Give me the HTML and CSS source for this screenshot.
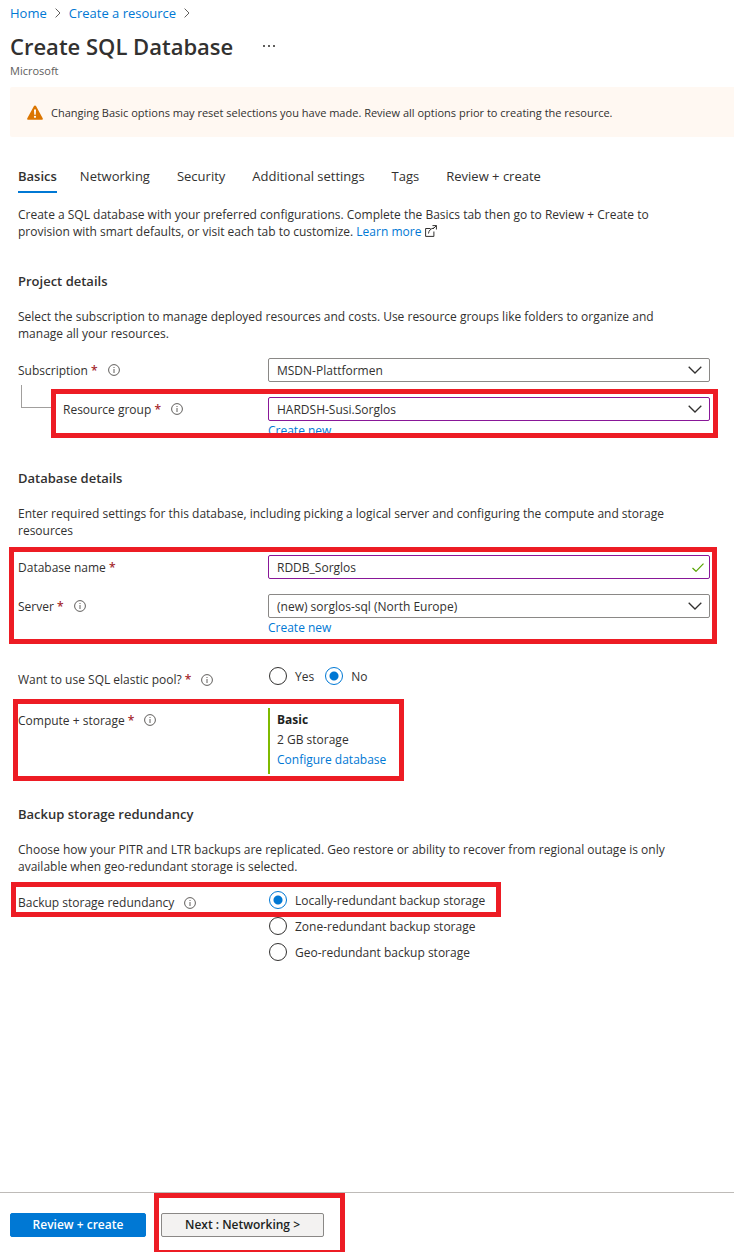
FILE: index.html
```html
<!DOCTYPE html>
<html lang="en">
<head>
<meta charset="utf-8">
<meta name="viewport" content="width=device-width, initial-scale=1">
<title>Create SQL Database</title>
<link rel="stylesheet" href="styles.css">
</head>
<body>
<svg class="sprite" aria-hidden="true">
  <symbol id="info" viewBox="0 0 12 12"><circle cx="6" cy="6" r="5.4" fill="none" stroke="#605e5c" stroke-width="1"/><path d="M6 5v4M6 3v1" stroke="#605e5c" stroke-width="1"/></symbol>
  <symbol id="down" viewBox="0 0 14 8"><path d="M.7.8 7 7 13.3.8" fill="none" stroke="#323130" stroke-width="1.3"/></symbol>
  <symbol id="right" viewBox="0 0 6 10"><path d="M.6.6 5 5 .6 9.400" fill="none" stroke="#605e5c" stroke-width="1"/></symbol>
</svg>
<div class="page">
  <header class="header">
    <nav class="crumbs" aria-label="Breadcrumb">
      <a href="#">Home</a><svg class="crumb-arrow"><use href="#right"/></svg>
      <a href="#">Create a resource</a><svg class="crumb-arrow"><use href="#right"/></svg>
    </nav>
    <div class="title-row">
      <h1>Create SQL Database</h1>
      <button class="more" type="button" aria-label="More actions"><svg viewBox="0 0 12 2"><path d="M0 0h2v2H0zM5 0h2v2H5zM10 0h2v2h-2z" fill="#605e5c"/></svg></button>
    </div>
    <p class="publisher">Microsoft</p>
  </header>

  <div class="banner" role="status">
    <svg class="warn" viewBox="0 0 16 15"><path d="M8 .4c.5 0 .8.3 1 .6l6.700 12.200c.4.8 0 1.600-.9 1.600H1.200c-.9 0-1.300-.8-.9-1.600L7 1c.2-.3.500-.6 1-.6z" fill="#db7500"/><path d="M7 4.500h2l-.3 5.300H7.300z" fill="#fff"/><circle cx="8" cy="11.800" r="1.100" fill="#fff"/></svg>
    <p>Changing Basic options may reset selections you have made. Review all options prior to creating the resource.</p>
  </div>

  <main class="content">
    <nav class="tabs" aria-label="Steps">
      <a class="tab active" href="#" aria-current="page">Basics</a>
      <a class="tab" href="#">Networking</a>
      <a class="tab" href="#">Security</a>
      <a class="tab" href="#">Additional settings</a>
      <a class="tab" href="#">Tags</a>
      <a class="tab" href="#">Review + create</a>
    </nav>
    <p class="intro">Create a SQL database with your preferred configurations. Complete the Basics tab then go to Review + Create to provision with smart defaults, or visit each tab to customize. <a href="#">Learn more <svg class="ext" viewBox="0 0 12 12"><path d="M5.500 3.500H.6v7.900h8.300V6.500M3.500 8.500c.3-2.800 2-5 5.500-5.500M7.500.6h3.900v3.900M11.400.6 8 4" fill="none" stroke="#323130" stroke-width="1"/></svg></a></p>

    <section class="section">
      <h2>Project details</h2>
      <p>Select the subscription to manage deployed resources and costs. Use resource groups like folders to organize and manage all your resources.</p>
      <div class="rows">
        <div class="row">
          <div class="label"><label for="subscription">Subscription <b class="req">*</b></label><svg class="info"><use href="#info"/></svg></div>
          <div class="select"><select id="subscription"><option>MSDN-Plattformen</option></select><svg class="down"><use href="#down"/></svg></div>
        </div>
        <div class="row nested mark mark-group">
          <div class="label"><span class="branch"></span><label for="group">Resource group <b class="req">*</b></label><svg class="info"><use href="#info"/></svg></div>
          <div>
            <div class="select edited"><select id="group"><option>HARDSH-Susi.Sorglos</option></select><svg class="down"><use href="#down"/></svg></div>
            <a class="new" href="#">Create new</a>
          </div>
        </div>
      </div>
    </section>

    <section class="section">
      <h2>Database details</h2>
      <p>Enter required settings for this database, including picking a logical server and configuring the compute and storage resources</p>
      <div class="rows mark mark-database">
        <div class="row">
          <div class="label"><label for="dbname">Database name <b class="req">*</b></label></div>
          <div class="select edited"><input id="dbname" type="text" value="RDDB_Sorglos"><svg class="check" viewBox="0 0 12 9"><path d="M.5 5 4 8.300 11.500.6" fill="none" stroke="#57a300" stroke-width="1.200"/></svg></div>
        </div>
        <div class="row">
          <div class="label"><label for="server">Server <b class="req">*</b></label><svg class="info"><use href="#info"/></svg></div>
          <div>
            <div class="select"><select id="server"><option>(new) sorglos-sql (North Europe)</option></select><svg class="down"><use href="#down"/></svg></div>
            <a class="new" href="#">Create new</a>
          </div>
        </div>
      </div>
      <div class="row pool" role="radiogroup" aria-labelledby="pool-label">
        <div class="label low"><span id="pool-label">Want to use SQL elastic pool? <b class="req">*</b></span><svg class="info"><use href="#info"/></svg></div>
        <div class="choices">
          <label class="choice"><input type="radio" name="pool">Yes</label>
          <label class="choice"><input type="radio" name="pool" checked>No</label>
        </div>
      </div>
      <div class="row compute mark mark-compute">
        <div class="label"><span>Compute + storage <b class="req">*</b></span><svg class="info"><use href="#info"/></svg></div>
        <div class="plan">
          <strong>Basic</strong>
          <span>2 GB storage</span>
          <a href="#">Configure database</a>
        </div>
      </div>
    </section>

    <section class="section">
      <h2>Backup storage redundancy</h2>
      <p>Choose how your PITR and LTR backups are replicated. Geo restore or ability to recover from regional outage is only available when geo-redundant storage is selected.</p>
      <div class="row backup mark mark-backup" role="radiogroup" aria-labelledby="backup-label">
        <div class="label low"><span id="backup-label">Backup storage redundancy</span><svg class="info"><use href="#info"/></svg></div>
        <div class="options">
          <label class="choice"><input type="radio" name="backup" checked>Locally-redundant backup storage</label>
          <label class="choice"><input type="radio" name="backup">Zone-redundant backup storage</label>
          <label class="choice"><input type="radio" name="backup">Geo-redundant backup storage</label>
        </div>
      </div>
    </section>
  </main>

  <footer class="footer">
    <button class="btn primary" type="button">Review + create</button>
    <span class="mark mark-next"><button class="btn next" type="button">Next : Networking &gt;</button></span>
  </footer>
</div>
</body>
</html>
```
FILE: styles.css
```css
*, *::after { box-sizing: border-box; }
body {
  margin: 0;
  background: #fff;
  color: #323130;
  font: 12px/17px "Open Sans", "Noto Sans", sans-serif;
}
h1, h2, p { margin: 0; }
a { color: #0078d4; text-decoration: none; }
svg { display: block; flex: none; }
.sprite { position: absolute; width: 0; height: 0; }
.page { display: flex; flex-direction: column; min-height: 100vh; }

.header { padding: 4px 10px 0; }
.crumbs { display: flex; align-items: center; gap: 8px; font-size: 13px; line-height: 18px; }
.crumb-arrow { width: 6px; height: 10px; }
.title-row { display: flex; align-items: center; gap: 30px; margin-top: 8px; }
h1 { font-size: 22px; line-height: 32px; font-weight: 600; }
.more { padding: 0; border: 0; background: none; }
.more svg { width: 12px; height: 2px; }
.publisher { font-size: 11px; line-height: 16px; color: #605e5c; margin-top: 1px; }

.banner {
  display: flex;
  align-items: center;
  gap: 8px;
  min-height: 50px;
  margin: 8px 0 0 10px;
  padding: 0 17px;
  background: #fff8f2;
  border-radius: 2px 0 0 2px;
  font-size: 11px;
}
.warn { width: 16px; height: 15px; }

.content { padding: 27px 24px 40px 18px; }
.content p { max-width: 670px; }
.tabs { display: flex; gap: 27px; margin-bottom: 13px; font-size: 13px; line-height: 24px; }
.tab { color: #323130; padding-bottom: 3px; border-bottom: 2px solid transparent; white-space: nowrap; }
.tab.active { margin-right: -4px; font-weight: 600; border-color: #0078d4; }
.intro { margin-bottom: 31px; }
.ext { display: inline-block; width: 12px; height: 12px; vertical-align: -1px; }

.section { margin-top: 29px; }
h2 { font-size: 13px; line-height: 20px; font-weight: 600; margin-bottom: 17px; }
.rows { display: grid; gap: 15px; margin-top: 16px; }
.row { display: grid; grid-template-columns: 250px minmax(0, 1fr); align-items: start; }
.label { display: flex; align-items: center; gap: 10px; min-height: 24px; }
.label.low { padding-top: 7px; }
.req { color: #a4262c; font-weight: 600; }
.info { width: 12px; height: 12px; }
.branch {
  width: 31px;
  height: 23px;
  margin: -26px 1px 0 3px;
  border: solid #a19f9d;
  border-width: 0 0 1px 1px;
}
.nested .label { gap: 10px; }

.select { display: grid; align-items: center; }
.select > * { grid-area: 1 / 1; }
.select select, .select input {
  appearance: none;
  width: 100%;
  height: 24px;
  padding: 0 30px 0 8px;
  border: 1px solid #8a8886;
  border-radius: 2px;
  background: #fff;
  color: #323130;
  font: inherit;
}
.select.edited select, .select.edited input { border-color: #881798; }
.down, .check { justify-self: end; pointer-events: none; }
.down { width: 14px; height: 8px; margin-right: 8px; }
.check { width: 12px; height: 9px; margin-right: 6px; }
.new { display: block; padding-top: 1px; }

.pool { margin-top: 28px; }
.choices { display: flex; gap: 10px; }
.choice { display: flex; align-items: center; gap: 8px; min-height: 24px; }
.choice input {
  appearance: none;
  width: 18px;
  height: 18px;
  margin: 0 0 0 1px;
  border: 1px solid #323130;
  border-radius: 50%;
  background: #fff;
}
.choice input:checked {
  border-color: #0078d4;
  background: radial-gradient(circle, #0078d4 4px, #fff 5px);
}
.compute { margin: 20px 0 30px; }
.plan {
  display: flex;
  flex-direction: column;
  padding: 2px 0 4px 7px;
  border-left: 2px solid #7fba00;
  line-height: 20px;
}
.plan strong { font-weight: 700; color: #201f1e; }
.backup { margin-top: 12px; }
.options .choice { min-height: 26px; }

.footer {
  display: flex;
  gap: 15px;
  margin-top: auto;
  padding: 20px 10px 15px;
  border-top: 1px solid #bebbb8;
  overflow: hidden;
}
.btn {
  min-width: 136px;
  height: 24px;
  padding: 0 21px;
  border: 1px solid #8a8886;
  border-radius: 2px;
  background: #f3f2f1;
  color: #201f1e;
  font: 600 12px/22px "Open Sans", "Noto Sans", sans-serif;
}
.btn.primary { background: #0078d4; border-color: #0078d4; color: #fff; }
.btn.next { min-width: 163px; }

/* Highlight frames drawn over the parts that need attention */
.mark { position: relative; }
.mark::after {
  content: "";
  position: absolute;
  border: 5px solid #ed1c24;
  pointer-events: none;
}
.mark-group::after { inset: -8px -8px 1px 33px; }
.mark-database::after { inset: -8px -7px -8px -9px; }
.mark-compute::after { inset: -9px auto -7px -5px; width: 391px; }
.mark-backup::after { top: -5px; left: -7px; width: 490px; height: 35px; }
.mark-next::after { inset: -20px -21px -18px -7px; }
```
